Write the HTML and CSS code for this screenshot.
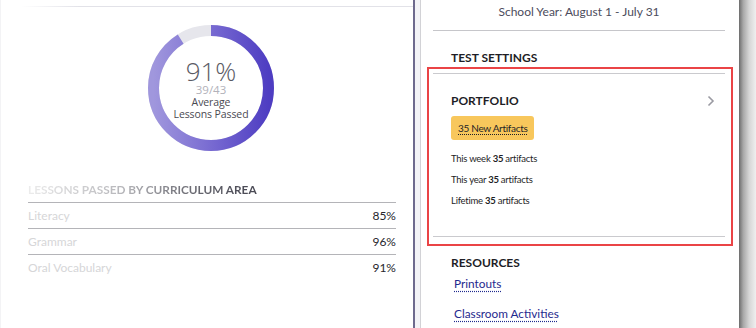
FILE: index.html
```html
<!DOCTYPE html>
<html lang="en">
<head>
    <meta charset="UTF-8">
    <meta name="viewport" content="width=device-width, initial-scale=1.0">
    <title>Class Overview</title>
    <link rel="stylesheet" href="styles.css">
</head>
<body>
    <div class="screen">
        <section class="stats">
            <div class="stats-rule"></div>

            <div class="donut">
                <svg width="126" height="126" viewBox="0 0 126 126">
                    <defs>
                        <!-- runs along local y, which is screen x once the ring is rotated -->
                        <linearGradient id="ringFill" x1="0" y1="0" x2="0" y2="1">
                            <stop offset="0" stop-color="#a097dd"/>
                            <stop offset="0.55" stop-color="#7466d0"/>
                            <stop offset="1" stop-color="#4e3dc2"/>
                        </linearGradient>
                    </defs>
                    <circle cx="63" cy="63" r="57.5" fill="none" stroke="#e6e6ec" stroke-width="11"/>
                    <!-- 91% of the ring, starting at the top going clockwise -->
                    <circle cx="63" cy="63" r="57.5" fill="none" stroke="url(#ringFill)" stroke-width="11"
                        stroke-dasharray="328.8 361.3" transform="rotate(-90 63 63)"/>
                </svg>
                <div class="donut-label">
                    <div class="donut-pct">91%</div>
                    <div class="donut-count">39/43</div>
                    <div class="donut-text">Average</div>
                    <div class="donut-text">Lessons Passed</div>
                </div>
            </div>

            <div class="areas">
                <h3 class="areas-title">LESSONS PASSED BY CURRICULUM AREA</h3>
                <div class="area-row"><span class="area-name">Literacy</span><span class="area-value">85%</span></div>
                <div class="area-row"><span class="area-name">Grammar</span><span class="area-value">96%</span></div>
                <div class="area-row"><span class="area-name">Oral Vocabulary</span><span class="area-value">91%</span></div>
            </div>
        </section>

        <div class="split"></div>

        <aside class="settings">
            <p class="school-year">School Year: August 1 - July 31</p>

            <h4 class="section-title test-title">TEST SETTINGS</h4>

            <div class="highlight">
                <div class="portfolio">
                    <div class="portfolio-head">
                        <span class="section-title">PORTFOLIO</span>
                        <svg class="chevron" width="8" height="12" viewBox="0 0 8 12">
                            <polyline points="1.5,1.5 6,6 1.5,10.5" fill="none" stroke="#9a9aa2" stroke-width="1.6"/>
                        </svg>
                    </div>
                    <a class="badge" href="#">35 New Artifacts</a>
                    <p class="stat">This week <b>35</b> artifacts</p>
                    <p class="stat">This year <b>35</b> artifacts</p>
                    <p class="stat">Lifetime <b>35</b> artifacts</p>
                </div>
            </div>

            <h4 class="section-title res-title">RESOURCES</h4>
            <a class="resource" href="#">Printouts</a>
            <a class="resource second" href="#">Classroom Activities</a>
        </aside>

        <div class="edge-shadow"></div>
    </div>
</body>
</html>
```

FILE: styles.css
```css
body {
    margin: 0;
    background: #ffffff;
    font-family: "Open Sans", "Noto Sans", sans-serif;
    overflow: hidden;
}

.screen {
    display: flex;
    width: 756px;
    height: 328px;
}

/* left side: lesson stats */

.stats {
    box-sizing: border-box;
    width: 415px;
    border-right: 2px solid #6e6a8e;
    border-left: 1px solid #f3f3f5;
    padding-top: 6px;
}

.stats-rule {
    height: 1px;
    margin-left: 20px;
    background: linear-gradient(90deg, #ffffff, #e2e2e8 15%, #e2e2e8);
}

.donut {
    position: relative;
    width: 126px;
    height: 126px;
    margin: 18px 0 0 147px;
}

.donut svg {
    display: block;
}

.donut-label {
    position: absolute;
    top: 33px;
    left: 0;
    right: 0;
    text-align: center;
}

.donut-pct {
    font-size: 26px;
    line-height: 26px;
    font-weight: 300;
    color: #5a5a64;
}

.donut-count {
    font-size: 11.5px;
    line-height: 12px;
    color: #b2b2ba;
}

.donut-text {
    font-size: 10.5px;
    line-height: 12px;
    color: #4a4a52;
    letter-spacing: -0.1px;
}

.areas {
    margin-top: 31px;
    padding: 0 17px 0 27px;
    font-family: Lato, "Open Sans", sans-serif;
}

.areas-title {
    margin: 0;
    padding-bottom: 4px;
    font-size: 11.8px;
    line-height: 16px;
    font-weight: 700;
    background: linear-gradient(90deg, #ececec 0, #b8b8bc 25%, #6a6a72 45%, #4a4a55 60%);
    -webkit-background-clip: text;
    background-clip: text;
    color: transparent;
}

.area-row {
    display: flex;
    justify-content: space-between;
    border-top: 1px solid #b4b4b8;
    height: 25px;
    line-height: 25px;
    font-size: 12px;
}

.area-name {
    color: #d6d6d8;
}

.area-value {
    color: #26262c;
}

/* thin gap between the two panels */

.split {
    width: 5px;
    background: #f3f3f7;
    border-right: 1px solid #d2d2d6;
}

/* right side: settings */

.settings {
    box-sizing: border-box;
    width: 318px;
    padding: 0 14px 0 12px;
    color: #22222a;
    font-family: Lato, "Open Sans", sans-serif;
}

.school-year {
    margin: 0;
    padding: 2px 0 8px;
    line-height: 20px;
    font-size: 12px;
    text-align: center;
    color: #4c4c5c;
    border-bottom: 1px solid #c6c6ca;
}

.section-title {
    margin: 0;
    font-weight: 700;
    font-size: 12px;
    line-height: 16px;
    color: #1e1e26;
    padding-left: 18px;
}

.test-title {
    padding-top: 19px;
}

.highlight {
    margin: 1px -8px 0 -6px;
    padding: 4px 6px 7px 4px;
    border: 2px solid #ea4446;
}

.portfolio {
    border-top: 1px solid #cacace;
    border-bottom: 1px solid #cacace;
    padding: 19px 0 25px 18px;
}

.portfolio-head {
    display: flex;
    justify-content: space-between;
    align-items: center;
    padding-right: 10px;
}

.portfolio-head .section-title {
    padding-left: 0;
}

.badge {
    display: inline-block;
    margin-top: 7px;
    padding: 0 7px;
    height: 24px;
    line-height: 24px;
    background: #f8c75c;
    border-radius: 3px;
    font-size: 10px;
    letter-spacing: -0.3px;
    color: #1e1e26;
    text-decoration: underline dotted;
    text-underline-offset: 2px;
}

.stat {
    margin: 0;
    font-size: 9.5px;
    letter-spacing: -0.25px;
    line-height: 21px;
    color: #1e1e26;
}

.badge + .stat {
    margin-top: 8px;
}

.stat b {
    font-weight: 700;
}

.res-title {
    margin-top: 9px;
}

.resource {
    display: table;
    margin: 4px 0 0 21px;
    font-size: 11.8px;
    line-height: 18px;
    color: #1f2a8e;
    text-decoration: underline dotted;
    text-underline-offset: 3px;
}

.resource.second {
    margin-top: 12px;
}

.edge-shadow {
    width: 17px;
    background: linear-gradient(90deg, #6c6c6c, #a8a8a8 25%, #d6d6d6 60%, #efefef);
}
```
